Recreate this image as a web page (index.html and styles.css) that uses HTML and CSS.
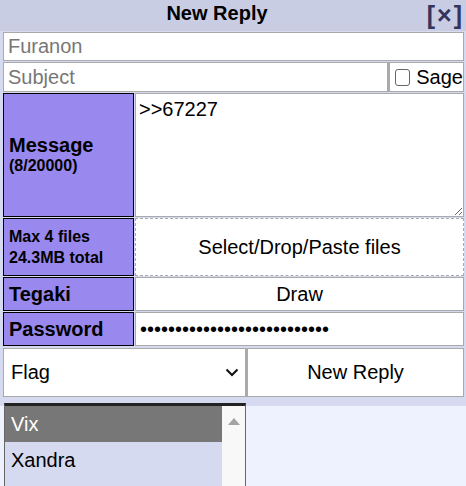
FILE: index.html
```html
<!DOCTYPE html>
<html lang="en">
<head>
  <meta charset="UTF-8" />
  <title>New Reply</title>
  <link rel="stylesheet" href="styles.css">
</head>
<body>
  <div class="qr">
    <div class="qr-head">
      <span class="qr-title">New Reply</span>
      <a class="qr-close" href="#">[&times;]</a>
    </div>
    <form class="qr-form">
      <input class="field name-field" type="text" placeholder="Furanon">
      <div class="subject-row">
        <input class="field subject-field" type="text" placeholder="Subject">
        <label class="sage"><span class="box"></span>Sage</label>
      </div>
      <div class="row message-row">
        <div class="label">Message<small>(8/20000)</small></div>
        <textarea class="field message-field">&gt;&gt;67227</textarea>
      </div>
      <div class="row files-row">
        <div class="label small-label">Max 4 files<br>24.3MB total</div>
        <div class="dropzone">Select/Drop/Paste files</div>
      </div>
      <div class="row tegaki-row">
        <div class="label">Tegaki</div>
        <button type="button" class="btn">Draw</button>
      </div>
      <div class="row password-row">
        <div class="label">Password</div>
        <input class="field pass-field" type="password" value="abcdefghijklmnopqrstuvwxyza">
      </div>
      <div class="flag-row">
        <div class="select">Flag
          <svg width="14" height="9" viewBox="0 0 14 9"><path d="M1.5 1.5 L7 7 L12.5 1.5" fill="none" stroke="#111" stroke-width="2"/></svg>
        </div>
        <button type="button" class="btn submit">New Reply</button>
      </div>
    </form>
  </div>

  <div class="flag-list">
    <div class="options">
      <div class="option active">Vix</div>
      <div class="option">Xandra</div>
    </div>
    <div class="scroll">
      <svg width="12" height="7" viewBox="0 0 12 7"><path d="M6 0 L12 7 L0 7 Z" fill="#a3a3a3"/></svg>
    </div>
  </div>
</body>
</html>
```

FILE: styles.css
```css
* { margin: 0; padding: 0; box-sizing: border-box; }
body {
  font-family: "Liberation Sans", Arial, sans-serif;
  font-size: 20px;
  background: #eef2ff;
  color: #000;
  position: relative;
  min-height: 486px;
  overflow: hidden;
}
/* Quick reply box */
.qr {
  background: #d6daf0;
  padding: 0 2px 9px 3px;
}
.qr-head {
  height: 32px;
  margin: 0 -2px 0 -3px;
  background: #c9cde4;
  position: relative;
  display: flex;
  justify-content: center;
  align-items: center;
  border-bottom: 1px solid #d9dcee;
}
.qr-title { font-weight: 700; margin-left: -32px; margin-top: -4px; }
.qr-close {
  position: absolute;
  right: 2px;
  top: 1px;
  color: #34345c;
  font-weight: 700;
  text-decoration: none;
  font-size: 25px;
  letter-spacing: 2px;
}
.qr-form {
  display: flex;
  flex-direction: column;
  gap: 1px;
}
.field {
  font-family: inherit;
  font-size: 20px;
  border: 1px solid #aaa;
  background: #fff;
  outline: none;
  padding: 0 4px;
  color: #000;
}
.field::placeholder { color: #777; }
.name-field { height: 29px; width: 100%; }
.subject-row { display: flex; height: 30px; }
.subject-field { flex: 1; height: 30px; }
.sage {
  width: 76px;
  border: 1px solid #aaa;
  border-left-width: 2px;
  background: #fff;
  display: flex;
  align-items: center;
  gap: 6px;
  padding-left: 5px;
}
.sage .box {
  width: 17px;
  height: 17px;
  border: 1px solid #666;
  border-radius: 3px;
  background: #fff;
}
/* Label + control rows */
.row {
  display: grid;
  grid-template-columns: 131px 1fr;
  gap: 1px;
}
.label {
  background: #9988ee;
  border: 1px solid #000;
  font-weight: 700;
  padding-left: 5px;
  display: flex;
  flex-direction: column;
  justify-content: center;
}
.label small { font-size: 16px; }
.small-label { font-size: 16px; line-height: 21px; }
.message-row { height: 124px; }
.message-field {
  resize: vertical;
  height: 124px;
  padding: 4px 3px;
  line-height: 23px;
}
.message-row .label { padding-bottom: 2px; }
.files-row { height: 58px; }
.dropzone {
  border: 1px dashed #aaa;
  background: #fff;
  display: flex;
  align-items: center;
  justify-content: center;
}
.tegaki-row { height: 34px; }
.password-row { height: 34px; }
.pass-field { height: 34px; }
.btn {
  font-family: inherit;
  font-size: 20px;
  background: #fff;
  border: 1px solid #aaa;
  color: #000;
}
.flag-row {
  display: flex;
  height: 49px;
  margin-top: 1px;
}
.select {
  width: 243px;
  background: #fff;
  border: 1px solid #aaa;
  display: flex;
  align-items: center;
  justify-content: space-between;
  padding: 0 6px 0 7px;
}
.submit { flex: 1; border-left-width: 2px; }
/* Open flag dropdown */
.flag-list {
  position: absolute;
  left: 4px;
  top: 403px;
  width: 242px;
  height: 90px;
  border-top: 3px solid #222;
  border-left: 1px solid #666;
  border-right: 1px solid #666;
  display: flex;
  background: #d6daf0;
}
.options { flex: 1; }
.option {
  height: 36px;
  line-height: 36px;
  padding-left: 6px;
}
.option.active { background: #777; color: #fff; }
.scroll {
  width: 23px;
  background: #f8f8f8;
  display: flex;
  justify-content: center;
  padding-top: 12px;
}
```
